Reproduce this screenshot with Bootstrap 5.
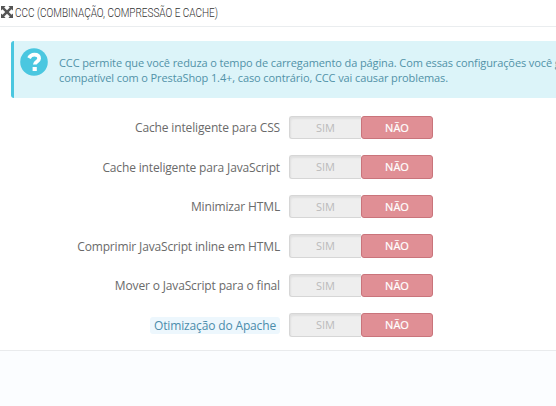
<!DOCTYPE html>
<html lang="pt-BR">
<head>
    <meta charset="UTF-8">
    <meta name="viewport" content="width=device-width, initial-scale=1">
    <title>CCC (Combinação, Compressão e Cache)</title>
    <link rel="stylesheet" href="https://cdn.jsdelivr.net/npm/bootstrap@5.3.0/dist/css/bootstrap.min.css">
    <style>
        body {
            height: 406px;
            overflow: hidden;
            background: #fbfdff;
            color: #6a6a6a;
            font-family: "Open Sans", sans-serif;
            font-size: 12px;
        }
        .panel { height: 351px; background: #fff; border-bottom: 1px solid #e9ebed; }
        .panel-title { height: 27px; padding: 0 0 3px 1px; border-bottom: 1px solid #eaedef; }
        .panel-title h1 {
            font-family: Roboto, sans-serif;
            font-size: 13.5px;
            font-weight: 300;
            line-height: 20px;
            color: #333;
            margin-left: 2px;
            transform: scaleX(.74);
            transform-origin: left;
            white-space: nowrap;
        }
        .info-box {
            height: 57px;
            margin: 14px 0 17.4px 11px;
            padding: 7px 0 0 6px;
            background: #dcf4f9;
            border-left: 3px solid #4ac7e0;
            border-radius: 3px 0 0 3px;
            color: #5192a8;
            font-size: 11px;
            line-height: 15px;
            letter-spacing: -.105px;
        }
        .info-box p { margin: 7px 0 0 11px; white-space: nowrap; }
        .setting { height: 24px; margin-bottom: 15.5px; }
        .setting-label { width: 280px; padding-top: 1.5px; text-align: right; white-space: nowrap; letter-spacing: -.15px; }
        .hint { padding: 0 4px; margin-top: 1px; background: #edf7fd; color: #4b8cab; border-radius: 3px; line-height: 17px; display: inline-block; }
        .switch { width: 144px; height: 23.5px; margin-left: 9px; font-size: 11px; line-height: 21px; text-align: center; }
        .switch-off {
            width: 72px;
            color: #bbb;
            background: #eee;
            border: 1px solid #d6d6d6;
            border-right: 0;
            border-radius: 3px 0 0 3px;
            box-shadow: inset 1px 2px 2px rgba(0, 0, 0, .06);
        }
        .switch-on { width: 72px; color: #fff; background: #e08f95; border: 1px solid #c9747b; border-radius: 3px; -webkit-text-stroke: .2px #fff; }
    </style>
</head>
<body>
    <div class="panel">
        <div class="panel-title d-flex align-items-center overflow-hidden">
            <svg width="12" height="12" viewBox="0 0 12 12" fill="#555">
                <path d="M0 0h4.6L3.2 1.5 6 4.2l2.8-2.7L7.4 0H12v4.6l-1.5-1.4L7.8 6l2.7 2.8L12 7.4V12H7.4l1.4-1.5L6 7.8l-2.8 2.7L4.6 12H0V7.4l1.5 1.4L4.2 6 1.5 3.2 0 4.6z"/>
            </svg>
            <h1 class="mb-0">CCC (COMBINAÇÃO, COMPRESSÃO E CACHE)</h1>
        </div>

        <div class="info-box d-flex overflow-hidden">
            <svg class="flex-shrink-0" width="28" height="28" viewBox="0 0 28 28">
                <circle cx="14" cy="14" r="13.8" fill="#4ac7e0"/>
                <path d="M9 10.2Q10.8 6.7 14.3 6.7c3 0 4.8 1.4 4.8 3.7 0 3.2-4.3 3.4-4.3 6.1" fill="none" stroke="#fff" stroke-width="3.8"/>
                <path d="M12.6 19h4.2v4h-4.2z" fill="#fff"/>
            </svg>
            <p>CCC permite que você reduza o tempo de carregamento da página. Com essas configurações você g<br>compatível com o PrestaShop 1.4+, caso contrário, CCC vai causar problemas.</p>
        </div>

        <div class="setting d-flex align-items-center">
            <div class="setting-label">Cache inteligente para CSS</div>
            <div class="switch d-flex"><div class="switch-off">SIM</div><div class="switch-on">NÃO</div></div>
        </div>
        <div class="setting d-flex align-items-center">
            <div class="setting-label">Cache inteligente para JavaScript</div>
            <div class="switch d-flex"><div class="switch-off">SIM</div><div class="switch-on">NÃO</div></div>
        </div>
        <div class="setting d-flex align-items-center">
            <div class="setting-label">Minimizar HTML</div>
            <div class="switch d-flex"><div class="switch-off">SIM</div><div class="switch-on">NÃO</div></div>
        </div>
        <div class="setting d-flex align-items-center">
            <div class="setting-label">Comprimir JavaScript inline em HTML</div>
            <div class="switch d-flex"><div class="switch-off">SIM</div><div class="switch-on">NÃO</div></div>
        </div>
        <div class="setting d-flex align-items-center">
            <div class="setting-label">Mover o JavaScript para o final</div>
            <div class="switch d-flex"><div class="switch-off">SIM</div><div class="switch-on">NÃO</div></div>
        </div>
        <div class="setting d-flex align-items-center">
            <div class="setting-label"><span class="hint">Otimização do Apache</span></div>
            <div class="switch d-flex"><div class="switch-off">SIM</div><div class="switch-on">NÃO</div></div>
        </div>
    </div>

    <script src="https://cdn.jsdelivr.net/npm/bootstrap@5.3.0/dist/js/bootstrap.bundle.min.js"></script>
</body>
</html>
